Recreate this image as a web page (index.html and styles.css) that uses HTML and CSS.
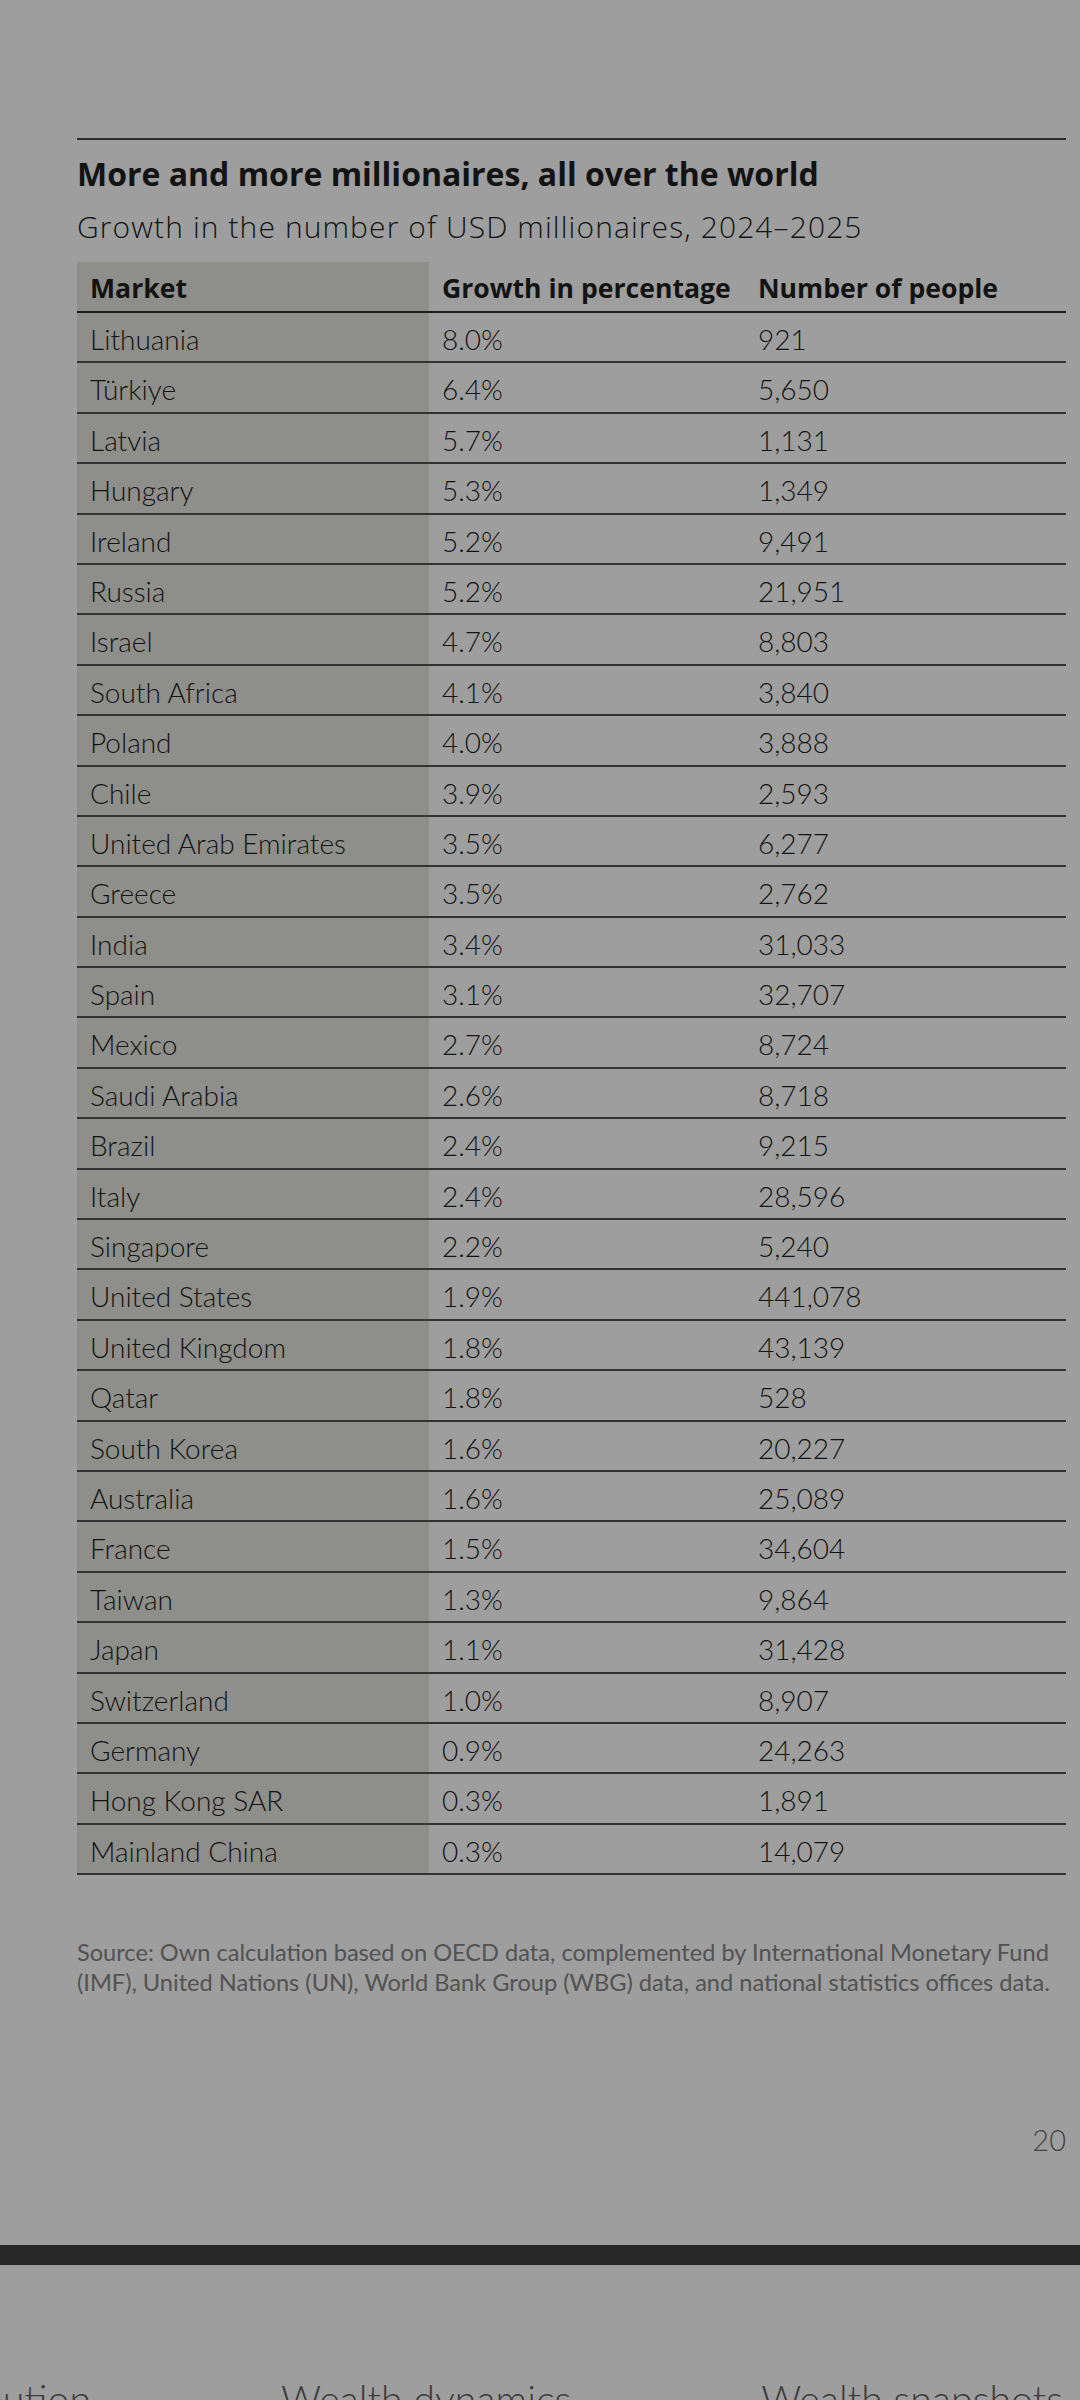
FILE: index.html
```html
<!DOCTYPE html>
<html lang="en">
<head>
<meta charset="utf-8">
<title>More and more millionaires</title>
<link rel="stylesheet" href="styles.css">
</head>
<body>
<main class="page">
  <hr class="rule">
  <h1 class="title">More and more millionaires, all over the world</h1>
  <p class="subtitle">Growth in the number of USD millionaires, 2024–2025</p>
  <div class="table" role="table">
    <div class="row head" role="row"><div class="cell mkt">Market</div><div class="cell">Growth in percentage</div><div class="cell">Number of people</div></div>
    <div class="row" role="row"><div class="cell mkt">Lithuania</div><div class="cell">8.0%</div><div class="cell">921</div></div>
    <div class="row" role="row"><div class="cell mkt">Türkiye</div><div class="cell">6.4%</div><div class="cell">5,650</div></div>
    <div class="row" role="row"><div class="cell mkt">Latvia</div><div class="cell">5.7%</div><div class="cell">1,131</div></div>
    <div class="row" role="row"><div class="cell mkt">Hungary</div><div class="cell">5.3%</div><div class="cell">1,349</div></div>
    <div class="row" role="row"><div class="cell mkt">Ireland</div><div class="cell">5.2%</div><div class="cell">9,491</div></div>
    <div class="row" role="row"><div class="cell mkt">Russia</div><div class="cell">5.2%</div><div class="cell">21,951</div></div>
    <div class="row" role="row"><div class="cell mkt">Israel</div><div class="cell">4.7%</div><div class="cell">8,803</div></div>
    <div class="row" role="row"><div class="cell mkt">South Africa</div><div class="cell">4.1%</div><div class="cell">3,840</div></div>
    <div class="row" role="row"><div class="cell mkt">Poland</div><div class="cell">4.0%</div><div class="cell">3,888</div></div>
    <div class="row" role="row"><div class="cell mkt">Chile</div><div class="cell">3.9%</div><div class="cell">2,593</div></div>
    <div class="row" role="row"><div class="cell mkt">United Arab Emirates</div><div class="cell">3.5%</div><div class="cell">6,277</div></div>
    <div class="row" role="row"><div class="cell mkt">Greece</div><div class="cell">3.5%</div><div class="cell">2,762</div></div>
    <div class="row" role="row"><div class="cell mkt">India</div><div class="cell">3.4%</div><div class="cell">31,033</div></div>
    <div class="row" role="row"><div class="cell mkt">Spain</div><div class="cell">3.1%</div><div class="cell">32,707</div></div>
    <div class="row" role="row"><div class="cell mkt">Mexico</div><div class="cell">2.7%</div><div class="cell">8,724</div></div>
    <div class="row" role="row"><div class="cell mkt">Saudi Arabia</div><div class="cell">2.6%</div><div class="cell">8,718</div></div>
    <div class="row" role="row"><div class="cell mkt">Brazil</div><div class="cell">2.4%</div><div class="cell">9,215</div></div>
    <div class="row" role="row"><div class="cell mkt">Italy</div><div class="cell">2.4%</div><div class="cell">28,596</div></div>
    <div class="row" role="row"><div class="cell mkt">Singapore</div><div class="cell">2.2%</div><div class="cell">5,240</div></div>
    <div class="row" role="row"><div class="cell mkt">United States</div><div class="cell">1.9%</div><div class="cell">441,078</div></div>
    <div class="row" role="row"><div class="cell mkt">United Kingdom</div><div class="cell">1.8%</div><div class="cell">43,139</div></div>
    <div class="row" role="row"><div class="cell mkt">Qatar</div><div class="cell">1.8%</div><div class="cell">528</div></div>
    <div class="row" role="row"><div class="cell mkt">South Korea</div><div class="cell">1.6%</div><div class="cell">20,227</div></div>
    <div class="row" role="row"><div class="cell mkt">Australia</div><div class="cell">1.6%</div><div class="cell">25,089</div></div>
    <div class="row" role="row"><div class="cell mkt">France</div><div class="cell">1.5%</div><div class="cell">34,604</div></div>
    <div class="row" role="row"><div class="cell mkt">Taiwan</div><div class="cell">1.3%</div><div class="cell">9,864</div></div>
    <div class="row" role="row"><div class="cell mkt">Japan</div><div class="cell">1.1%</div><div class="cell">31,428</div></div>
    <div class="row" role="row"><div class="cell mkt">Switzerland</div><div class="cell">1.0%</div><div class="cell">8,907</div></div>
    <div class="row" role="row"><div class="cell mkt">Germany</div><div class="cell">0.9%</div><div class="cell">24,263</div></div>
    <div class="row" role="row"><div class="cell mkt">Hong Kong SAR</div><div class="cell">0.3%</div><div class="cell">1,891</div></div>
    <div class="row" role="row"><div class="cell mkt">Mainland China</div><div class="cell">0.3%</div><div class="cell">14,079</div></div>
  </div>
  <p class="source">Source: Own calculation based on OECD data, complemented by International Monetary Fund (IMF), United Nations (UN), World Bank Group (WBG) data, and national statistics offices data.</p>
  <div class="page-num">20</div>
</main>
<div class="bar"></div>
<nav class="tabs">
  <span class="tab">Wealth distribution</span>
  <span class="tab">Wealth dynamics</span>
  <span class="tab">Wealth snapshots</span>
</nav>
</body>
</html>
```
FILE: styles.css
```css
html, body {
  margin: 0;
  padding: 0;
}
body {
  width: 1080px;
  height: 2400px;
  overflow: hidden;
  background: #9e9e9e;
  font-family: "Lato", "Noto Sans", "Liberation Sans", sans-serif;
  color: #131313;
}
.page {
  padding: 138px 14px 0 77px;
}
.rule {
  margin: 0;
  border: 0;
  border-top: 2px solid #2e2e2e;
  height: 0;
}
.title {
  margin: 15px 0 0;
  font-family: "Open Sans", "Noto Sans", sans-serif;
  font-size: 32px;
  line-height: 38px;
  font-weight: 700;
  letter-spacing: 0;
}
.subtitle {
  margin: 16px 0 0;
  font-family: "Open Sans", "Noto Sans", sans-serif;
  font-size: 30px;
  line-height: 36px;
  font-weight: 300;
  letter-spacing: 1.1px;
  white-space: nowrap;
}
.table {
  margin-top: 17px;
  display: flex;
  flex-direction: column;
}
.row {
  display: grid;
  grid-template-columns: 352px 316px 1fr;
  height: 50.4px;
  box-sizing: border-box;
  border-bottom: 2px solid #333;
}
.row.head {
  height: 51px;
  border-bottom-color: #1c1c1c;
}
.cell {
  padding: 9px 0 0 13px;
  font-size: 28px;
  line-height: 34px;
  font-weight: 300;
  white-space: nowrap;
}
.head .cell {
  padding-top: 8.5px;
  font-family: "Open Sans", "Noto Sans", sans-serif;
  font-weight: 700;
  font-size: 26.6px;
}
.mkt {
  background: #8e8e8a;
}
.source {
  margin: 62px 0 0;
  font-size: 23.6px;
  line-height: 30px;
  color: #525252;
  font-weight: 400;
}
.page-num {
  margin-top: 125px;
  text-align: right;
  font-size: 29px;
  line-height: 36px;
  font-weight: 300;
  color: #434343;
}
.bar {
  margin-top: 87px;
  height: 20px;
  background: #282828;
}
.tabs {
  margin-top: 110px;
  display: flex;
  justify-content: flex-end;
  gap: 190px;
  padding-right: 17px;
  white-space: nowrap;
  font-size: 39.4px;
  line-height: 48px;
  font-weight: 300;
  color: #3c3c3c;
}
.tab {
  flex-shrink: 0;
}
```
